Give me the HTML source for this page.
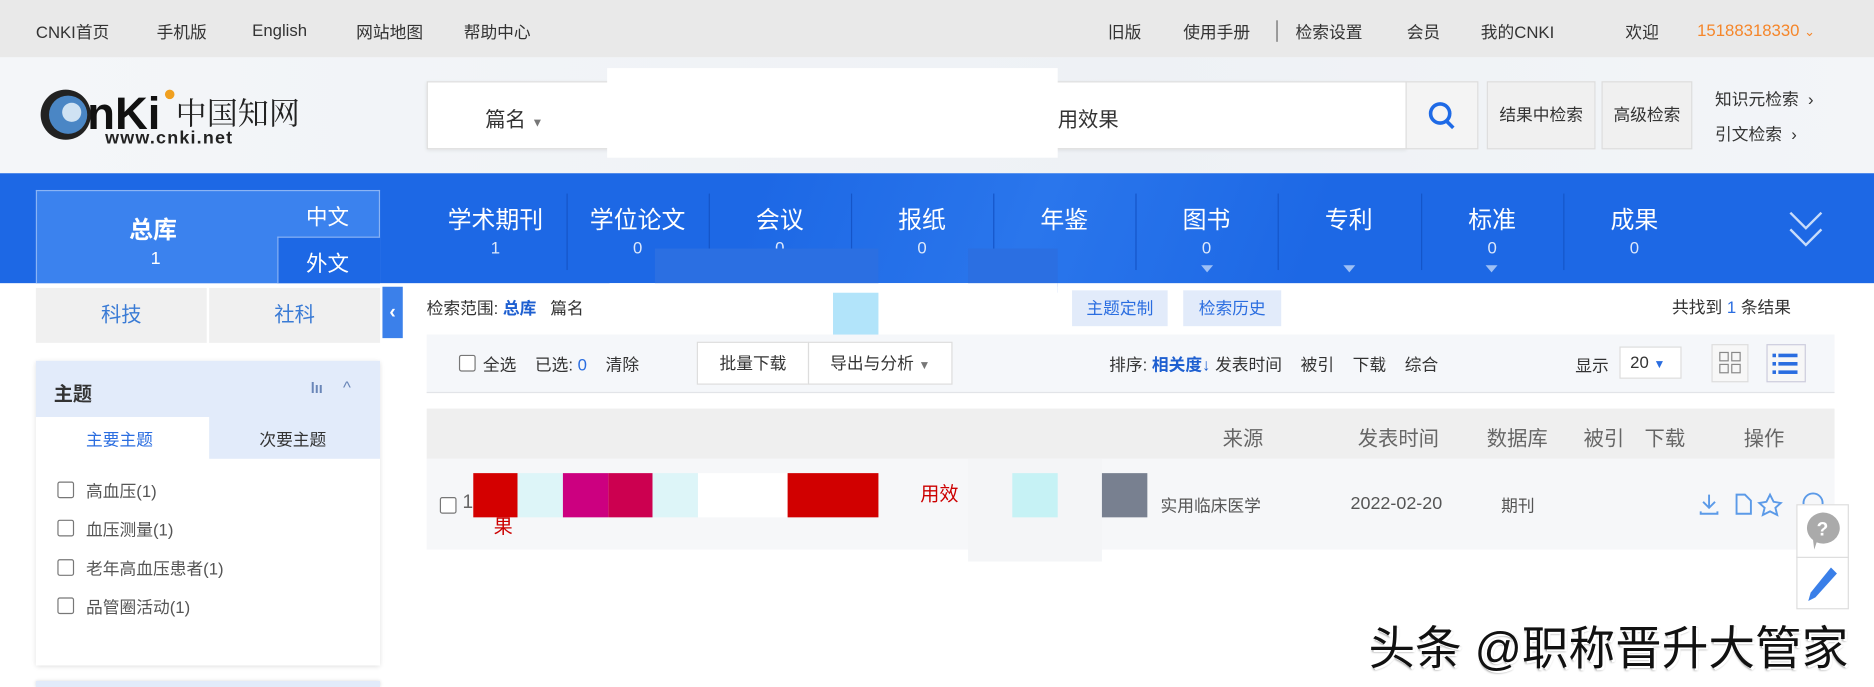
<!DOCTYPE html>
<html><head><meta charset="utf-8"><style>
*{margin:0;padding:0;box-sizing:border-box}
html,body{width:1874px;height:687px;overflow:hidden;background:#fff}
#w{position:absolute;left:0;top:0;width:1568px;height:575px;transform:scale(1.19515,1.19478);transform-origin:0 0;font-family:"Liberation Sans","Noto Sans CJK SC",sans-serif;color:#333;font-size:14px}
.a{position:absolute;white-space:nowrap}
.nv{position:absolute;top:168px;width:119px;text-align:center;color:#fff;font-size:20px}
.nv i{display:block;font-style:normal;font-size:14px;margin-top:2px;opacity:.85}
.dv{position:absolute;top:162px;width:1px;height:64px;background:#1555c8}
.tri{position:absolute;top:222px;width:0;height:0;border-left:5px solid transparent;border-right:5px solid transparent;border-top:6px solid #9ec0f5}
.cb{position:absolute;width:14px;height:14px;border:1px solid #777;border-radius:2px;background:#fff}
.blk{position:absolute;top:396px;height:37px}
</style></head><body><div id="w">
<!-- top bar -->
<div class="a" style="left:0;top:0;width:1568px;height:48px;background:#e9e9e9"></div>
<div class="a" style="left:30px;top:17px">CNKI首页</div>
<div class="a" style="left:131px;top:17px">手机版</div>
<div class="a" style="left:211px;top:17px">English</div>
<div class="a" style="left:298px;top:17px">网站地图</div>
<div class="a" style="left:388px;top:17px">帮助中心</div>
<div class="a" style="left:927px;top:17px">旧版</div>
<div class="a" style="left:990px;top:17px">使用手册</div>
<div class="a" style="left:1068px;top:17px;width:1px;height:18px;background:#666"></div>
<div class="a" style="left:1084px;top:17px">检索设置</div>
<div class="a" style="left:1177px;top:17px">会员</div>
<div class="a" style="left:1239px;top:17px">我的CNKI</div>
<div class="a" style="left:1360px;top:17px">欢迎</div>
<div class="a" style="left:1420px;top:17px;color:#f5862a">15188318330 <span style="font-size:11px">&#8964;</span></div>
<!-- header -->
<div class="a" style="left:0;top:48px;width:1568px;height:97px;background:linear-gradient(90deg,#f4f6f9,#eef1f5 60%,#f3f5f8)"></div>
<svg class="a" style="left:33px;top:68px" width="230" height="58" viewBox="0 0 230 58">
<circle cx="22" cy="28" r="21" fill="#222"/><circle cx="24" cy="28" r="16" fill="#4a86c5"/><circle cx="27" cy="26" r="8" fill="#cfe2f3"/>
<text x="40" y="40" font-family="Liberation Sans" font-weight="bold" font-size="38" fill="#111">nKi</text>
<circle cx="109" cy="11" r="4" fill="#f0a020"/>
<text x="114" y="36" font-family="Noto Serif CJK SC" font-size="26" fill="#222">中国知网</text>
<text x="55" y="52" font-family="Liberation Sans" font-size="15" font-weight="bold" fill="#222" letter-spacing="1">www.cnki.net</text></svg>
<div class="a" style="left:357px;top:68px;width:820px;height:57px;background:#fff;border:1px solid #ddd;box-shadow:0 1px 3px rgba(0,0,0,.08)"></div>
<div class="a" style="left:406px;top:86px;font-size:17px">篇名 <span style="font-size:10px;color:#777">▼</span></div>
<div class="a" style="left:508px;top:57px;width:377px;height:75px;background:#fff"></div>
<div class="a" style="left:885px;top:86px;font-size:17px">用效果</div>
<div class="a" style="left:1176px;top:68px;width:61px;height:57px;background:#f4f4f4;border:1px solid #ddd"></div>
<svg class="a" style="left:1194px;top:84px" width="26" height="26" viewBox="0 0 26 26"><circle cx="11" cy="11" r="8" fill="none" stroke="#1e6ae6" stroke-width="3"/><path d="M16 17 L22 23" stroke="#1e6ae6" stroke-width="3"/></svg>
<div class="a" style="left:1244px;top:68px;width:91px;height:57px;background:#f0f0f0;border:1px solid #ddd;text-align:center;line-height:55px">结果中检索</div>
<div class="a" style="left:1340px;top:68px;width:76px;height:57px;background:#f0f0f0;border:1px solid #ddd;text-align:center;line-height:55px">高级检索</div>
<div class="a" style="left:1435px;top:73px">知识元检索 &nbsp;›</div>
<div class="a" style="left:1435px;top:102px">引文检索 &nbsp;›</div>
<!-- blue nav -->
<div class="a" style="left:0;top:145px;width:1568px;height:92px;background:linear-gradient(110deg,#1d68e5 40%,#2a76ec 55%,#1d68e5 70%)"></div>
<div class="a" style="left:30px;top:159px;width:288px;height:78px;background:#3b82ee;border:1px solid #8ab4f5;border-bottom:none"></div>
<div class="a" style="left:108px;top:176px;color:#fff;font-size:20px;font-weight:bold">总库</div>
<div class="a" style="left:126px;top:208px;color:#fff;font-size:15px">1</div>
<div class="a" style="left:232px;top:198px;width:86px;height:39px;background:#1d68e5;border-top:1px solid #8ab4f5;border-left:1px solid #8ab4f5"></div>
<div class="a" style="left:256px;top:168px;color:#fff;font-size:18px">中文</div>
<div class="a" style="left:256px;top:207px;color:#fff;font-size:18px">外文</div>
<div class="nv" style="left:355px">学术期刊<i>1</i></div>
<div class="nv" style="left:474px">学位论文<i>0</i></div>
<div class="nv" style="left:593px">会议<i>0</i></div>
<div class="nv" style="left:712px">报纸<i>0</i></div>
<div class="nv" style="left:831px">年鉴</div>
<div class="nv" style="left:950px">图书<i>0</i></div>
<div class="nv" style="left:1069px">专利</div>
<div class="nv" style="left:1189px">标准<i>0</i></div>
<div class="nv" style="left:1308px">成果<i>0</i></div>
<div class="dv" style="left:474px"></div><div class="dv" style="left:593px"></div><div class="dv" style="left:712px"></div><div class="dv" style="left:831px"></div><div class="dv" style="left:950px"></div><div class="dv" style="left:1069px"></div><div class="dv" style="left:1189px"></div><div class="dv" style="left:1308px"></div>
<div class="tri" style="left:1005px"></div><div class="tri" style="left:1124px"></div><div class="tri" style="left:1243px"></div>
<svg class="a" style="left:1496px;top:176px" width="30" height="34" viewBox="0 0 30 34"><path d="M2 2 L15 15 L28 2 M2 16 L15 29 L28 16" fill="none" stroke="#c8dcfa" stroke-width="2"/></svg>
<div class="a" style="left:548px;top:208px;width:187px;height:37px;background:#2b6fe2"></div>
<div class="a" style="left:810px;top:208px;width:75px;height:37px;background:#2b6fe2"></div>
<div class="a" style="left:510px;top:237px;width:375px;height:53px;background:#fff"></div>
<div class="a" style="left:697px;top:245px;width:38px;height:38px;background:#b2e4fa"></div>
<!-- sidebar -->
<div class="a" style="left:30px;top:241px;width:143px;height:46px;background:#f0f0f0;color:#3a7bd5;font-size:17px;text-align:center;line-height:46px">科技</div>
<div class="a" style="left:175px;top:241px;width:143px;height:46px;background:#f0f0f0;color:#3a7bd5;font-size:17px;text-align:center;line-height:46px">社科</div>
<div class="a" style="left:320px;top:240px;width:17px;height:43px;background:#3b80ea;color:#fff;font-size:16px;text-align:center;line-height:43px;font-weight:bold">‹</div>
<div class="a" style="left:30px;top:302px;width:288px;height:255px;background:#fff;box-shadow:0 1px 4px rgba(0,0,0,.15)"></div>
<div class="a" style="left:30px;top:302px;width:288px;height:47px;background:#e2ebfa"></div>
<div class="a" style="left:45px;top:316px;font-size:16px;font-weight:bold">主题</div>
<div class="a" style="left:260px;top:318px;color:#6a86b8;font-size:12px;font-weight:bold">lıı</div>
<div class="a" style="left:287px;top:316px;color:#6a86b8;font-size:14px">^</div>
<div class="a" style="left:175px;top:349px;width:143px;height:35px;background:#e2ebfa"></div>
<div class="a" style="left:72px;top:358px;color:#2a6de0">主要主题</div>
<div class="a" style="left:217px;top:358px">次要主题</div>
<div class="cb" style="left:48px;top:403px"></div><div class="a" style="left:72px;top:401px;color:#555">高血压(1)</div>
<div class="cb" style="left:48px;top:435px"></div><div class="a" style="left:72px;top:433px;color:#555">血压测量(1)</div>
<div class="cb" style="left:48px;top:468px"></div><div class="a" style="left:72px;top:466px;color:#555">老年高血压患者(1)</div>
<div class="cb" style="left:48px;top:500px"></div><div class="a" style="left:72px;top:498px;color:#555">品管圈活动(1)</div>
<div class="a" style="left:30px;top:570px;width:288px;height:5px;background:#e2ebfa;box-shadow:0 0 3px rgba(0,0,0,.15)"></div>
<!-- main -->
<div class="a" style="left:357px;top:248px">检索范围: <b style="color:#1e5fd0">总库</b> &nbsp; 篇名</div>
<div class="a" style="left:510px;top:240px;width:375px;height:50px;background:#fff"></div>
<div class="a" style="left:697px;top:245px;width:38px;height:38px;background:#b2e4fa"></div>
<div class="a" style="left:897px;top:243px;width:80px;height:30px;background:#e2ebfa;color:#2a6de0;text-align:center;line-height:30px">主题定制</div>
<div class="a" style="left:990px;top:243px;width:82px;height:30px;background:#e2ebfa;color:#2a6de0;text-align:center;line-height:30px">检索历史</div>
<div class="a" style="left:1399px;top:247px">共找到 <span style="color:#2a6de0">1</span> 条结果</div>
<div class="a" style="left:357px;top:280px;width:1178px;height:49px;background:#f5f7fa;border-bottom:1px solid #e2e4e8"></div>
<div class="cb" style="left:384px;top:297px"></div>
<div class="a" style="left:404px;top:295px">全选 &nbsp;&nbsp; 已选: <span style="color:#2a6de0">0</span> &nbsp;&nbsp; 清除</div>
<div class="a" style="left:583px;top:286px;width:94px;height:36px;background:#fff;border:1px solid #ddd;text-align:center;line-height:34px">批量下载</div>
<div class="a" style="left:676px;top:286px;width:121px;height:36px;background:#fff;border:1px solid #ddd;text-align:center;line-height:34px">导出与分析 <span style="font-size:10px;color:#777">▼</span></div>
<div class="a" style="left:928px;top:295px">排序: <b style="color:#1e5fd0">相关度↓</b> 发表时间 &nbsp;&nbsp; 被引 &nbsp;&nbsp; 下载 &nbsp;&nbsp; 综合</div>
<div class="a" style="left:1318px;top:296px">显示</div>
<div class="a" style="left:1355px;top:290px;width:52px;height:27px;background:#fff;border:1px solid #ddd;padding-left:8px;line-height:25px">20 <span style="font-size:10px;color:#2a6de0">▼</span></div>
<div class="a" style="left:1432px;top:288px;width:31px;height:32px;background:#f7f7f7;border:1px solid #ddd"></div>
<svg class="a" style="left:1438px;top:294px" width="20" height="20"><rect x="1" y="1" width="7" height="7" fill="none" stroke="#888"/><rect x="11" y="1" width="7" height="7" fill="none" stroke="#888"/><rect x="1" y="11" width="7" height="7" fill="none" stroke="#888"/><rect x="11" y="11" width="7" height="7" fill="none" stroke="#888"/></svg>
<div class="a" style="left:1478px;top:288px;width:33px;height:32px;background:#f7f7f7;border:1px solid #ccd"></div>
<svg class="a" style="left:1483px;top:294px" width="22" height="20"><g fill="#2a6de0"><rect x="0" y="2" width="3" height="3"/><rect x="5" y="2" width="16" height="3"/><rect x="0" y="9" width="3" height="3"/><rect x="5" y="9" width="16" height="3"/><rect x="0" y="16" width="3" height="3"/><rect x="5" y="16" width="16" height="3"/></g></svg>
<!-- table -->
<div class="a" style="left:357px;top:342px;width:1178px;height:42px;background:#efefef"></div>
<div class="a" style="left:357px;top:384px;width:1178px;height:76px;background:#f6f7f9"></div>
<div class="a" style="left:1023px;top:353px;font-size:17px;color:#666">来源</div>
<div class="a" style="left:1136px;top:353px;font-size:17px;color:#666">发表时间</div>
<div class="a" style="left:1244px;top:353px;font-size:17px;color:#666">数据库</div>
<div class="a" style="left:1325px;top:353px;font-size:17px;color:#666">被引</div>
<div class="a" style="left:1376px;top:353px;font-size:17px;color:#666">下载</div>
<div class="a" style="left:1459px;top:353px;font-size:17px;color:#666">操作</div>
<div class="cb" style="left:368px;top:416px"></div>
<div class="a" style="left:387px;top:412px;color:#666;font-size:16px">1</div>
<div class="blk" style="left:396px;width:37px;background:#d40000"></div>
<div class="blk" style="left:433px;width:38px;background:#ddf5f8"></div>
<div class="blk" style="left:471px;width:38px;background:#cc0080"></div>
<div class="blk" style="left:509px;width:37px;background:#cc0050"></div>
<div class="blk" style="left:546px;width:38px;background:#ddf5f8"></div>
<div class="blk" style="left:584px;width:75px;background:#fff"></div>
<div class="blk" style="left:659px;width:76px;background:#d10000"></div>
<div class="a" style="left:413px;top:427px;color:#c00;font-size:16px">果</div>
<div class="a" style="left:770px;top:400px;color:#c00;font-size:16px">用效</div>
<div class="a" style="left:810px;top:384px;width:112px;height:86px;background:#f4f5f7"></div>
<div class="blk" style="left:847px;width:38px;background:#c6f2f5"></div>
<div class="blk" style="left:922px;width:38px;background:#788090"></div>
<div class="a" style="left:971px;top:413px;color:#555">实用临床医学</div>
<div class="a" style="left:1130px;top:413px;color:#555;font-size:15px">2022-02-20</div>
<div class="a" style="left:1256px;top:413px;color:#555">期刊</div>
<svg class="a" style="left:1420px;top:411px" width="110" height="22" viewBox="0 0 110 22" fill="none" stroke="#5b9ae8" stroke-width="1.6">
<path d="M10 3 V14 M5 9 L10 14 L15 9 M3 17 V19 H17 V17"/><path d="M33 3 H40 L45 8 V19 H33 Z"/><path d="M61 3 L64 9 L70 10 L65.5 14 L67 20 L61 17 L55 20 L56.5 14 L52 10 L58 9 Z"/><circle cx="97" cy="10" r="8"/></svg>
<div class="a" style="left:1503px;top:422px;width:44px;height:88px;background:#fff;border:1px solid #ddd"></div>
<div class="a" style="left:1503px;top:466px;width:44px;height:1px;background:#ddd"></div>
<svg class="a" style="left:1508px;top:427px" width="34" height="34" viewBox="0 0 34 34"><path d="M17 2 A14 13 0 1 1 12 27 L10 33 L9 25 A14 13 0 0 1 17 2Z" fill="#aaa"/><text x="12" y="21" font-size="16" font-weight="bold" fill="#fff" font-family="Liberation Sans">?</text></svg>
<svg class="a" style="left:1510px;top:472px" width="30" height="34" viewBox="0 0 30 34"><path d="M22 3 L27 8 L9 28 L3 31 L5 24 Z" fill="#3a7fe8"/></svg>
<div class="a" style="left:1145px;top:512px;font-size:39px;color:#111;text-shadow:2px 2px 0 #fff,-1px -1px 0 #fff,1px 2px 2px #888;letter-spacing:0px">头条 @职称晋升大管家</div>
</div></body></html>
